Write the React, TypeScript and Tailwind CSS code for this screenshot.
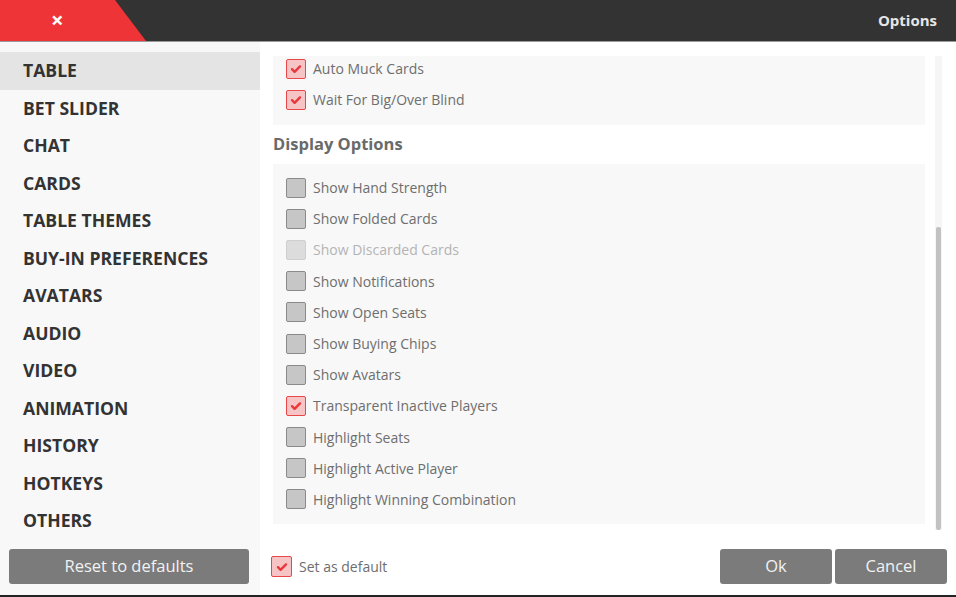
import { ReactNode } from 'react'

const navItems = [
  'TABLE',
  'BET SLIDER',
  'CHAT',
  'CARDS',
  'TABLE THEMES',
  'BUY-IN PREFERENCES',
  'AVATARS',
  'AUDIO',
  'VIDEO',
  'ANIMATION',
  'HISTORY',
  'HOTKEYS',
  'OTHERS',
]

type Opt = { label: string; checked?: boolean; disabled?: boolean }

const gameOptions: Opt[] = [
  { label: 'Auto Muck Cards', checked: true },
  { label: 'Wait For Big/Over Blind', checked: true },
]

const displayOptions: Opt[] = [
  { label: 'Show Hand Strength' },
  { label: 'Show Folded Cards' },
  { label: 'Show Discarded Cards', disabled: true },
  { label: 'Show Notifications' },
  { label: 'Show Open Seats' },
  { label: 'Show Buying Chips' },
  { label: 'Show Avatars' },
  { label: 'Transparent Inactive Players', checked: true },
  { label: 'Highlight Seats' },
  { label: 'Highlight Active Player' },
  { label: 'Highlight Winning Combination' },
]

function Check() {
  return (
    <svg width="12" height="10" viewBox="0 0 12 10" fill="none">
      <path d="M2 5.2l2.6 2.6L10 2.4" stroke="#e8383c" strokeWidth="2.4" strokeLinecap="round" strokeLinejoin="round" />
    </svg>
  )
}

function Checkbox({ checked, disabled }: { checked?: boolean; disabled?: boolean }) {
  if (checked) {
    return (
      <span className="flex h-[20px] w-[20px] shrink-0 items-center justify-center rounded-[2px] border border-[#e8474a] bg-[#f6c4c5]">
        <Check />
      </span>
    )
  }
  return (
    <span
      className={
        disabled
          ? 'h-[20px] w-[20px] shrink-0 rounded-[2px] border border-[#cfcfcf] bg-[#dcdcdc]'
          : 'h-[20px] w-[20px] shrink-0 rounded-[2px] border border-[#8a8a8a] bg-[#c6c6c6]'
      }
    />
  )
}

function OptionRow({ opt, h }: { opt: Opt; h: string }) {
  return (
    <div className={`flex items-center gap-[7px] pl-[13px] ${h}`}>
      <Checkbox checked={opt.checked} disabled={opt.disabled} />
      <span className={opt.disabled ? 'text-[14px] text-[#b4b4b4]' : 'text-[14px] text-[#6e6e6e]'}>
        {opt.label}
      </span>
    </div>
  )
}

function GrayButton({ children, className }: { children: ReactNode; className: string }) {
  return (
    <button className={`flex h-[35px] items-center justify-center rounded-[3px] bg-[#7b7b7b] text-[16.5px] text-[#f2f2f2] ${className}`}>
      {children}
    </button>
  )
}

export default function App() {
  return (
    <div className="flex h-[597px] w-[956px] flex-col overflow-hidden bg-white font-['Open_Sans',sans-serif]">
      {/* Header */}
      <div className="relative flex h-[42px] shrink-0 items-center justify-end border-b border-[#9a9a9a] bg-[#333333] pr-[19px]">
        <div className="absolute left-0 top-0 h-[41px] w-[146px] bg-[#ee3437] [clip-path:polygon(0_0,115px_0,146px_100%,0_100%)]" />
        <span className="absolute left-[51px] top-[6px] text-[22px] font-bold leading-[26px] text-white">×</span>
        <span className="text-[15px] font-bold text-[#e6e6e6]">Options</span>
      </div>

      <div className="flex min-h-0 flex-1">
        {/* Sidebar */}
        <div className="flex w-[260px] shrink-0 flex-col bg-[#f8f8f8] pt-[10px]">
          {navItems.map((item, i) => (
            <div
              key={item}
              className={`flex h-[37.5px] items-center pb-[1px] pl-[23px] text-[17.6px] font-bold text-[#333333] ${i === 0 ? 'bg-[#e4e4e4]' : ''}`}
            >
              {item}
            </div>
          ))}
          <div className="mt-[9px] pl-[9px] pr-[11px]">
            <GrayButton className="w-full">Reset to defaults</GrayButton>
          </div>
        </div>

        {/* Content */}
        <div className="flex flex-1 flex-col">
          <div className="mt-[14px] flex h-[474px] pl-[13px]">
            <div className="w-[652px] overflow-hidden">
              <div className="bg-[#f8f8f8] pb-[9.5px]">
                <div className="-mt-[3px]">
                  {gameOptions.map((o) => (
                    <OptionRow key={o.label} opt={o} h="h-[31px]" />
                  ))}
                </div>
              </div>
              <div className="flex h-[39px] items-center text-[16.5px] font-bold text-[#6a6a6a]">Display Options</div>
              <div className="bg-[#f8f8f8] py-[8.5px]">
                {displayOptions.map((o) => (
                  <OptionRow key={o.label} opt={o} h="h-[31.2px]" />
                ))}
              </div>
            </div>
            <div className="ml-[10px] flex w-[7px] flex-col bg-[#f6f6f6]">
              <div className="flex-[171]" />
              <div className="mx-[1px] flex-[303] rounded-[2px] bg-[#c2c2c2]" />
            </div>
          </div>

          <div className="mt-[19px] flex items-center pl-[11px] pr-[9px]">
            <span className="flex h-[21px] w-[21px] items-center justify-center rounded-[2px] border border-[#e8474a] bg-[#f6c4c5]">
              <Check />
            </span>
            <span className="ml-[7px] text-[14px] text-[#6e6e6e]">Set as default</span>
            <div className="ml-auto flex gap-[3px]">
              <GrayButton className="w-[112px]">Ok</GrayButton>
              <GrayButton className="w-[112px]">Cancel</GrayButton>
            </div>
          </div>
        </div>
      </div>
      <div className="h-[2px] shrink-0 bg-[#222222]" />
    </div>
  )
}
